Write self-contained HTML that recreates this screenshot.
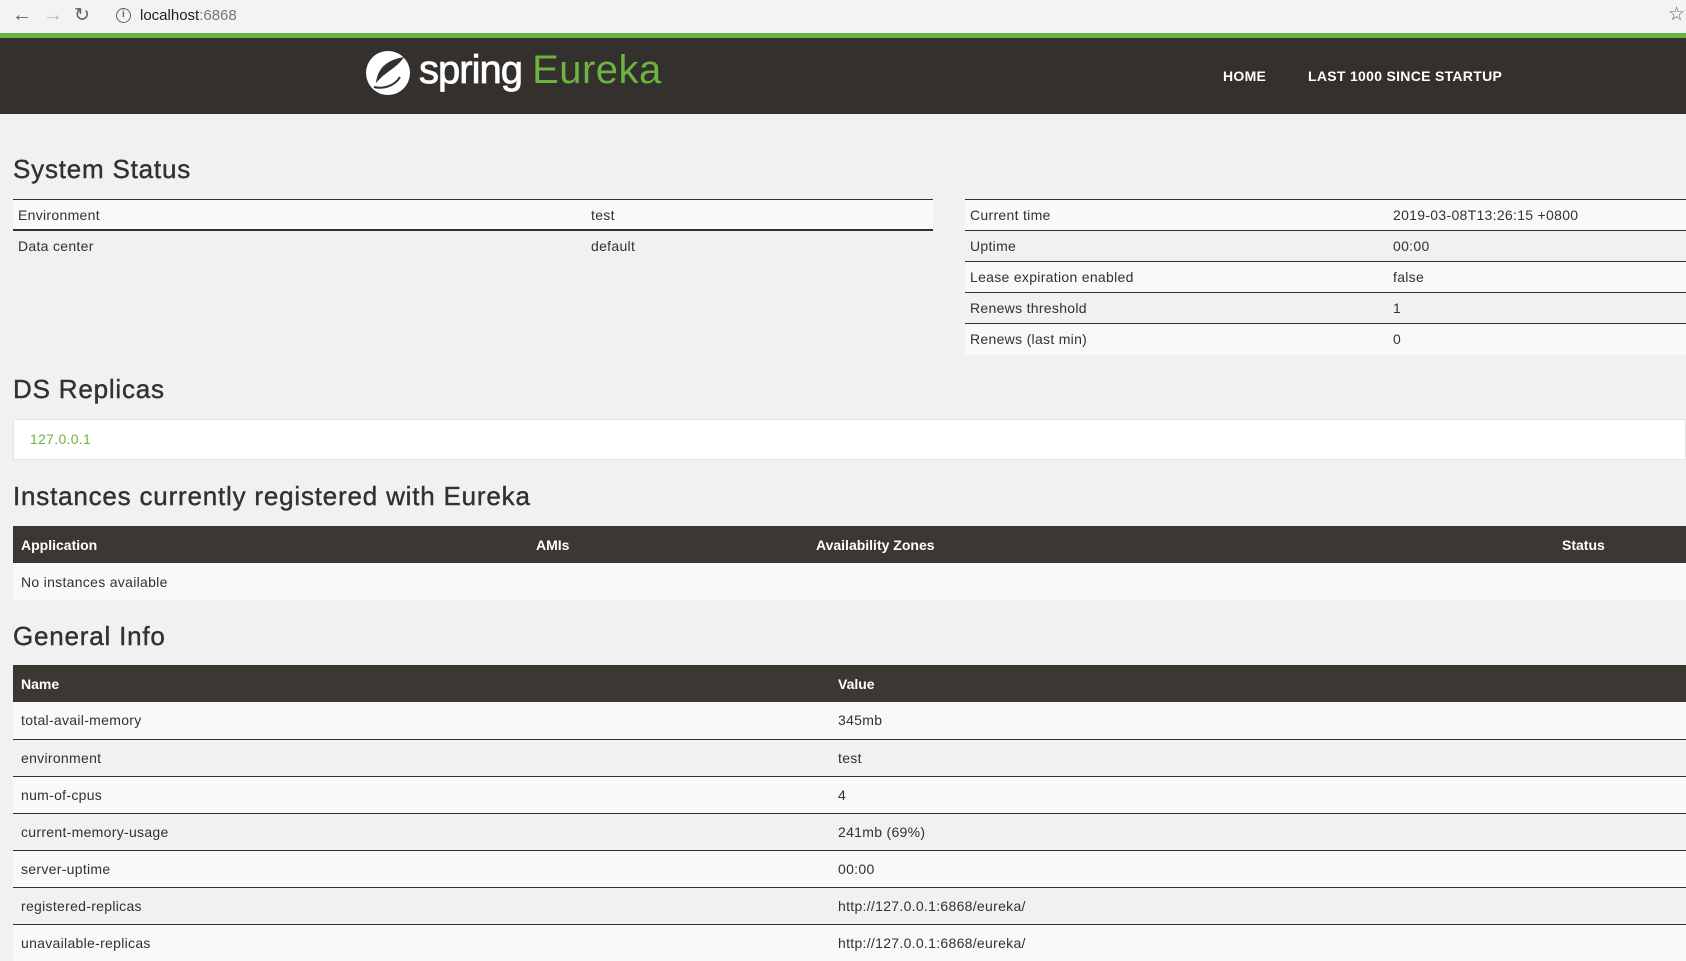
<!DOCTYPE html>
<html><head><meta charset="utf-8"><style>
*{box-sizing:border-box;margin:0;padding:0}
body{width:1686px;height:945px;overflow:hidden;background:#f1f1f1;font-family:"Liberation Sans",sans-serif;color:#34302d;font-size:14px;position:relative;letter-spacing:0.3px}
.abs{position:absolute}
#bar{left:0;top:0;width:1686px;height:33px;background:#f1f3f4}
#url{left:106px;top:3px;width:1560px;height:26px;background:#f1f3f4;border-radius:13px;font-size:15px;line-height:26px;padding-left:34px;color:#202124;letter-spacing:0}
#green{left:0;top:33px;width:1686px;height:5px;background:#6db33f}
#head{left:0;top:38px;width:1686px;height:76px;background:#34302d}
.nav{color:#fff;font-weight:bold;font-size:14px;top:68px}
h2{position:absolute;font-size:26px;font-weight:normal;color:#34302d;left:13px;letter-spacing:0.8px;-webkit-text-stroke:0.4px #34302d}
table{position:absolute;border-collapse:collapse}
td,th{text-align:left;padding:0 0 0 5px}
.st td{height:31px;border-top:1px solid #34302d}
.st tr:nth-child(odd){background:#f9f9f9}
.dk th{background:#3b3733;color:#fff;font-weight:bold;height:37px;padding-left:8px;letter-spacing:0}
.dk td{height:37px;padding-left:8px;border-top:1px solid #34302d}
.dk tr:nth-child(even) td{background:#f9f9f9}
</style></head><body>
<div id="bar" class="abs"></div>
<div class="abs" style="left:12px;top:4px;font-size:20px;color:#5f6368">&#8592;</div>
<div class="abs" style="left:43px;top:4px;font-size:20px;color:#bbb">&#8594;</div>
<div class="abs" style="left:74px;top:4px;font-size:19px;color:#5f6368">&#8635;</div>
<div id="url" class="abs">localhost<span style="color:#777">:6868</span></div>
<div class="abs" style="left:116px;top:8px;width:15px;height:15px;border:1.5px solid #5f6368;border-radius:50%;font-size:10px;text-align:center;line-height:12px;color:#5f6368;font-weight:bold">i</div>
<div class="abs" style="left:1668px;top:3px;font-size:19px;color:#5f6368">&#9734;</div>
<div id="green" class="abs"></div>
<div id="head" class="abs"></div>
<svg class="abs" style="left:364px;top:49px" width="48" height="48" viewBox="0 0 48 48"><circle cx="24" cy="24" r="22" fill="#fff"/><path d="M40 8 C30 10 14 14 12 34 C22 22 32 20 40 8Z" fill="#34302d"/><path d="M10 38 C18 40 30 38 36 28" stroke="#34302d" stroke-width="2" fill="none"/></svg>
<div class="abs" style="left:419px;top:48px;font-size:40px;color:#fff;letter-spacing:-1px;-webkit-text-stroke:0.8px #fff">spring <span style="color:#6db33f;letter-spacing:0.5px;-webkit-text-stroke:0">Eureka</span></div>
<div class="abs nav" style="left:1223px">HOME</div>
<div class="abs nav" style="left:1308px">LAST 1000 SINCE STARTUP</div>

<h2 style="top:154px">System Status</h2>
<table class="st" style="left:13px;top:199px;width:920px">
<tr><td style="width:573px">Environment</td><td>test</td></tr>
<tr style="background:none"><td>Data center</td><td>default</td></tr>
</table>
<div class="abs" style="left:13px;top:229px;width:920px;height:1px;background:#34302d"></div>
<table class="st" style="left:965px;top:199px;width:721px">
<tr><td style="width:423px">Current time</td><td>2019-03-08T13:26:15 +0800</td></tr>
<tr><td>Uptime</td><td>00:00</td></tr>
<tr><td>Lease expiration enabled</td><td>false</td></tr>
<tr><td>Renews threshold</td><td>1</td></tr>
<tr><td>Renews (last min)</td><td>0</td></tr>
</table>

<h2 style="top:374px">DS Replicas</h2>
<div class="abs" style="left:13px;top:419px;width:1673px;height:41px;background:#fff;border:1px solid #e4e4e4;padding-left:16px;line-height:39px;color:#6db33f">127.0.0.1</div>

<h2 style="top:481px">Instances currently registered with Eureka</h2>
<table class="dk" style="left:13px;top:526px;width:1673px">
<tr><th style="width:515px">Application</th><th style="width:280px">AMIs</th><th style="width:746px">Availability Zones</th><th>Status</th></tr>
<tr><td colspan="4" style="background:#f9f9f9;border-top:none">No instances available</td></tr>
</table>

<h2 style="top:621px">General Info</h2>
<table class="dk" style="left:13px;top:665px;width:1673px">
<tr><th style="width:817px">Name</th><th>Value</th></tr>
<tr><td style="border-top:none">total-avail-memory</td><td style="border-top:none">345mb</td></tr>
<tr><td>environment</td><td>test</td></tr>
<tr><td>num-of-cpus</td><td>4</td></tr>
<tr><td>current-memory-usage</td><td>241mb (69%)</td></tr>
<tr><td>server-uptime</td><td>00:00</td></tr>
<tr><td>registered-replicas</td><td>http://127.0.0.1:6868/eureka/</td></tr>
<tr><td>unavailable-replicas</td><td>http://127.0.0.1:6868/eureka/</td></tr>
</table>
</body></html>
